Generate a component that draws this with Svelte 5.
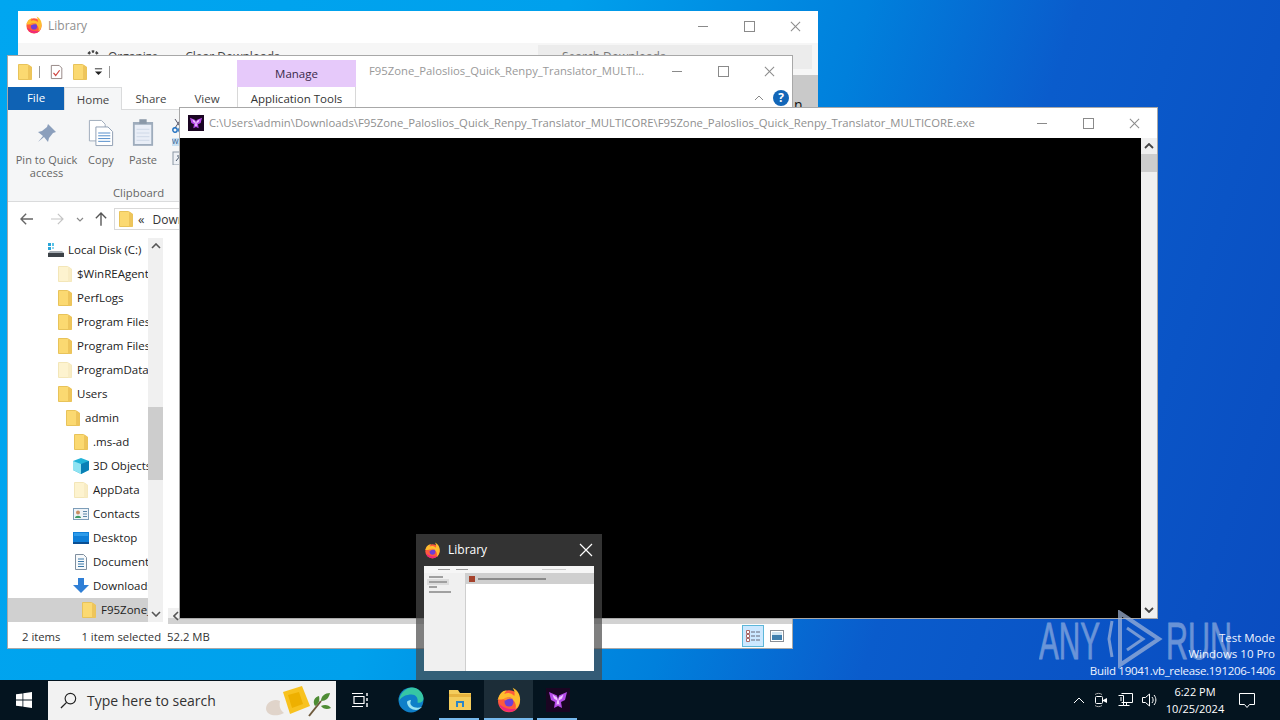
<script lang="ts">
  const consolePath =
    "C:\\Users\\admin\\Downloads\\F95Zone_Paloslios_Quick_Renpy_Translator_MULTICORE\\F95Zone_Paloslios_Quick_Renpy_Translator_MULTICORE.exe";

  // depth is the indent level in the nav pane
  const tree = [
    { name: "Local Disk (C:)", depth: 0, icon: "disk" },
    { name: "$WinREAgent", depth: 1, icon: "pale" },
    { name: "PerfLogs", depth: 1, icon: "folder" },
    { name: "Program Files", depth: 1, icon: "folder" },
    { name: "Program Files (x86)", depth: 1, icon: "folder" },
    { name: "ProgramData", depth: 1, icon: "pale" },
    { name: "Users", depth: 1, icon: "folder" },
    { name: "admin", depth: 2, icon: "folder" },
    { name: ".ms-ad", depth: 3, icon: "folder" },
    { name: "3D Objects", depth: 3, icon: "cube" },
    { name: "AppData", depth: 3, icon: "pale" },
    { name: "Contacts", depth: 3, icon: "contacts" },
    { name: "Desktop", depth: 3, icon: "desktop" },
    { name: "Documents", depth: 3, icon: "docs" },
    { name: "Downloads", depth: 3, icon: "down" },
    { name: "F95Zone_Paloslios", depth: 4, icon: "folder", selected: true },
  ];
</script>

{#snippet folder(pale = false)}
  <svg class="ico" viewBox="0 0 16 16" width="16" height="16">
    <path d="M1.5 0.5h9l4 2.5v12.5h-13z" fill={pale ? "#fdf3cf" : "#fbd971"} stroke={pale ? "#f3e6b8" : "#e8c35a"} />
    <path d="M11 1v14.5h3.5V3z" fill={pale ? "#f8ecc4" : "#eec55b"} />
  </svg>
{/snippet}

{#snippet fox(size = 16)}
  <svg viewBox="0 0 32 32" width={size} height={size}>
    <circle cx="16" cy="17.5" r="13.5" fill="#ff5a3c" />
    <path d="M2.500 15C4 8 9 4 13 4.500c-1.500 1-2.500 2.500-2.500 4 4-2 9-1 12 2.500 1-3.500 0-7-2-10 6.500 3 10 9.500 9 16.500-.7 5-3 8.500-6 10.500 3-6-1-14-8-14-5 0-9 2-15 1z" fill="#ffbd2e" />
    <circle cx="16" cy="18.500" r="5.500" fill="#6d3fd8" />
    <path d="M9 15c3-3 9-3.500 12 0-3-.8-7-.5-9 1.500z" fill="#ff8a30" />
    <path d="M3.500 21c2 6 7 9.500 12.500 9.500 4 0 7.500-1.500 10-4.500-5 2-14 2-22.500-5z" fill="#f0287a" />
  </svg>
{/snippet}

{#snippet moth(size = 16)}
  <svg viewBox="0 0 24 24" width={size} height={size}>
    <rect width="24" height="24" fill="#1a0522" />
    <path d="M3 4l8 3.500 1 3.500 1-3.500L21 4l-2 8-4 2 1 6-4-2-4 2 1-6-4-2z" fill="#b64ae8" />
    <path d="M6.500 6.500l4.500 3 1 4 1-4 4.500-3-1.500 4-3 2 .5 4.500-1.500-1-1.500 1 .5-4.500-3-2z" fill="#f0c4ff" />
  </svg>
{/snippet}

{#snippet treeIcon(kind: string)}
  {#if kind === "folder"}
    {@render folder()}
  {:else if kind === "pale"}
    {@render folder(true)}
  {:else if kind === "disk"}
    <svg class="ico" viewBox="0 0 16 16" width="16" height="16">
      <rect x="0" y="1" width="3" height="3" fill="#2aa5d8" /><rect x="4" y="1" width="2" height="3" fill="#58c3e8" />
      <rect x="0" y="5" width="3" height="3" fill="#2aa5d8" /><rect x="4" y="5" width="2" height="2" fill="#8bd6ef" />
      <path d="M2 9h12l2 2H0z" fill="#a7adb3" /><rect x="0" y="11" width="16" height="4" fill="#3c4248" />
    </svg>
  {:else if kind === "cube"}
    <svg class="ico" viewBox="0 0 16 16" width="16" height="16">
      <path d="M8 0l8 3v9l-8 4-8-4V3z" fill="#22b3d8" /><path d="M0 3l8 3v10l-8-4z" fill="#8fe3f2" /><path d="M16 3l-8 3v10l8-4z" fill="#0a7fb5" />
    </svg>
  {:else if kind === "contacts"}
    <svg class="ico" viewBox="0 0 16 16" width="16" height="16">
      <rect x="0.5" y="2.5" width="15" height="11" fill="#eef3f8" stroke="#7d9db8" />
      <circle cx="5" cy="6.5" r="2" fill="#c98f62" /><path d="M2 12c0-3 6-3 6 0z" fill="#3d9a62" />
      <path d="M10 5.5h4M10 8h4M10 10.5h4" stroke="#5d86a8" />
    </svg>
  {:else if kind === "desktop"}
    <svg class="ico" viewBox="0 0 16 16" width="16" height="16">
      <rect x="0" y="2" width="16" height="11" fill="#0f7fd8" /><rect x="0" y="12" width="16" height="2" fill="#0b4f93" />
      <rect x="1" y="3" width="14" height="3" fill="#2d9bea" />
    </svg>
  {:else if kind === "docs"}
    <svg class="ico" viewBox="0 0 16 16" width="16" height="16">
      <path d="M2.5 0.5h8l3 3v12h-11z" fill="#f7f9fb" stroke="#7f8f9f" />
      <path d="M5 5h6M5 7.5h6M5 10h6M5 12.5h6" stroke="#3b78a8" />
    </svg>
  {:else if kind === "down"}
    <svg class="ico" viewBox="0 0 16 16" width="16" height="16">
      <path d="M5 0h6v7h5l-8 8-8-8h5z" fill="#2f7fd6" />
    </svg>
  {/if}
{/snippet}

<div class="desktop">
  <div class="wall">
    <!-- firefox library, behind everything -->
    <section class="win library">
      <header class="lib-title">
        {@render fox(18)}
        <span>Library</span>
        <div class="caps">
          <i class="min"></i><i class="max"></i><i class="close"></i>
        </div>
      </header>
      <div class="lib-tools">
        <svg class="gear" viewBox="0 0 16 16" width="16" height="16"><circle cx="8" cy="8" r="5.500" fill="none" stroke="#444" stroke-width="2.500" stroke-dasharray="2.500 1.500" /></svg>
        <span>Organize</span>
        <span class="clear">Clear Downloads</span>
        <div class="lib-search">Search Downloads</div>
      </div>
      <div class="lib-row"><span>n</span></div>
    </section>

    <!-- explorer -->
    <section class="win explorer">
      <header class="ex-title">
        <div class="qat">
          {@render folder()}
          <b class="sep"></b>
          <svg class="doc" viewBox="0 0 16 16" width="14" height="16"><path d="M1.5 0.5h9l3 3v12h-12z" fill="#fff" stroke="#8a7a78" /><path d="M4 9l2.5 3L11 6" fill="none" stroke="#d0453f" stroke-width="1.4" /></svg>
          <span class="qat-folder">{@render folder()}</span>
          <svg viewBox="0 0 10 10" width="9" height="9"><path d="M1 2h8" stroke="#222" /><path d="M1 5h8L5 9z" fill="#222" /></svg>
          <b class="sep"></b>
        </div>
        <div class="manage">Manage</div>
        <div class="ex-name">F95Zone_Paloslios_Quick_Renpy_Translator_MULTI...</div>
        <div class="caps">
          <i class="min"></i><i class="max"></i><i class="close"></i>
        </div>
      </header>
      <nav class="tabs">
        <span class="file">File</span>
        <span class="tab on">Home</span>
        <span class="tab share">Share</span>
        <span class="tab view">View</span>
        <span class="apptools">Application Tools</span>
        <span class="collapse">
          <svg viewBox="0 0 10 6" width="10" height="6"><path d="M1 5l4-4 4 4" fill="none" stroke="#888" /></svg>
        </span>
        <span class="help">?</span>
      </nav>
      <div class="ribbon">
        <div class="group">
          <div class="btns">
            <div class="btn pin">
              <svg viewBox="0 0 24 24" width="24" height="24"><path d="M13 3l8 8-3 1-4 5-1 4-4-5-6 5 5-6-5-4 4-1 5-4z" fill="#8b9fbc" /></svg>
              <span>Pin to Quick<br />access</span>
            </div>
            <div class="btn copy">
              <svg viewBox="0 0 28 30" width="26" height="28"><path d="M1.5 1.5h13l4 4v18h-17z" fill="#fff" stroke="#9aa8b8" /><path d="M8.5 8.5h13l5 5v15h-18z" fill="#fff" stroke="#8a9ab0" /><path d="M11 15h13M11 18h13M11 21h13M11 24h13" stroke="#4a86c8" /></svg>
              <span>Copy</span>
            </div>
            <div class="btn paste">
              <svg viewBox="0 0 24 30" width="22" height="28"><rect x="1" y="3" width="22" height="26" fill="#9eacbc" /><rect x="3" y="6" width="18" height="21" fill="#e9eef7" /><rect x="8" y="0" width="8" height="5" fill="#8a98a8" /><path d="M5 11h14M5 15h14M5 19h14M5 23h14" stroke="#cdd6e6" /></svg>
              <span>Paste</span>
            </div>
            <div class="mini">
              <svg viewBox="0 0 12 14" width="12" height="14"><path d="M9 0L3 9M3 0l6 9" stroke="#556" fill="none" /><circle cx="3" cy="11" r="2.2" fill="none" stroke="#1f6fc0" stroke-width="1.4" /><circle cx="9" cy="11" r="2.2" fill="none" stroke="#1f6fc0" stroke-width="1.4" /></svg>
              <span class="w">W...</span>
              <svg viewBox="0 0 12 14" width="12" height="14"><rect x="1" y="1" width="11" height="13" fill="#eef1f5" stroke="#8a96a4" /><path d="M4 10l4-5M5 5h3v3" stroke="#46566a" fill="none" /></svg>
            </div>
          </div>
          <div class="glabel">Clipboard</div>
        </div>
      </div>
      <div class="addr">
        <svg viewBox="0 0 16 14" width="14" height="12"><path d="M7 1L1 7l6 6M1 7h14" fill="none" stroke="#666" stroke-width="1.6" /></svg>
        <svg class="fwd" viewBox="0 0 16 14" width="14" height="12"><path d="M9 1l6 6-6 6M15 7H1" fill="none" stroke="#c4c4c4" stroke-width="1.4" /></svg>
        <svg class="drop" viewBox="0 0 8 5" width="8" height="5"><path d="M1 1l3 3 3-3" fill="none" stroke="#888" stroke-width="1.2" /></svg>
        <svg class="up" viewBox="0 0 14 16" width="12" height="14"><path d="M1 7l6-6 6 6M7 1v15" fill="none" stroke="#555" stroke-width="1.6" /></svg>
        <div class="addr-box">
          {@render folder()}
          <span class="crumbs">«</span>
          <span>Downloads</span>
        </div>
      </div>
      <div class="body">
        <div class="nav">
          <ul>
            {#each tree as row}
              <li class:selected={row.selected} style="padding-left: {row.depth === 0 ? 40 : 41 + row.depth * 8}px">
                {@render treeIcon(row.icon)}
                <span>{row.name}</span>
              </li>
            {/each}
          </ul>
          <div class="nav-scroll">
            <svg viewBox="0 0 10 6" width="10" height="6"><path d="M1 5l4-4 4 4" fill="none" stroke="#555" stroke-width="1.6" /></svg>
            <div class="nav-track"><div class="nav-thumb"></div></div>
            <svg viewBox="0 0 10 6" width="10" height="6"><path d="M1 1l4 4 4-4" fill="none" stroke="#555" stroke-width="1.6" /></svg>
          </div>
        </div>
        <div class="files">
          <div class="hbar">
            <svg viewBox="0 0 6 10" width="6" height="10"><path d="M5 1L1 5l4 4" fill="none" stroke="#555" stroke-width="1.6" /></svg>
          </div>
        </div>
      </div>
      <footer class="status">
        <span class="count">2 items</span>
        <span>1 item selected</span>
        <span>52.2 MB</span>
        <div class="views">
          <span class="v on">
            <svg viewBox="0 0 16 14" width="16" height="14"><path d="M1.5 1.5h3v3h-3zM1.5 5.5h3v3h-3zM1.5 9.5h3v3h-3z" fill="#fff" stroke="#a66" /><path d="M6 3h4M11 3h4M6 7h4M11 7h4M6 11h4M11 11h4" stroke="#667" /></svg>
          </span>
          <span class="v">
            <svg viewBox="0 0 14 12" width="14" height="12"><rect x="0.5" y="0.5" width="13" height="11" fill="#fff" stroke="#8a8f96" /><rect x="2" y="2" width="10" height="8" fill="#3f7fae" /><path d="M2 5h10V2H2z" fill="#cfe4f2" /></svg>
          </span>
        </div>
      </footer>
    </section>

    <!-- console host -->
    <section class="win console">
      <header class="con-title">
        {@render moth(16)}
        <span class="con-path">{consolePath}</span>
        <div class="caps">
          <i class="min"></i><i class="max"></i><i class="close"></i>
        </div>
      </header>
      <div class="con-body">
        <div class="screen"></div>
        <div class="con-scroll">
          <svg viewBox="0 0 10 6" width="10" height="6"><path d="M1 5l4-4 4 4" fill="none" stroke="#444" stroke-width="1.8" /></svg>
          <div class="con-track"><div class="con-thumb"></div></div>
          <svg viewBox="0 0 10 6" width="10" height="6"><path d="M1 1l4 4 4-4" fill="none" stroke="#444" stroke-width="1.8" /></svg>
        </div>
      </div>
    </section>

    <!-- watermark + test mode text -->
    <svg class="mark" viewBox="0 0 200 60" width="200" height="60">
      <g fill="#c8d4ea" opacity="0.5" stroke="#c8d4ea" stroke-width="0.8" font-family="Liberation Sans, sans-serif" font-size="52">
        <text x="0" y="49" textLength="61" lengthAdjust="spacingAndGlyphs">ANY</text>
        <text x="127" y="49" textLength="66" lengthAdjust="spacingAndGlyphs">RUN</text>
      </g>
      <g fill="none" stroke="#a4b8da" stroke-opacity="0.7" stroke-width="4">
        <path d="M81 3l39 26-39 26z" />
        <path d="M88 18l16 11-16 11" stroke-width="3" />
        <path d="M73 11L70 29l3 18" stroke-width="3" />
      </g>
    </svg>
    <div class="testmode">
      <span>Test Mode</span>
      <span>Windows 10 Pro</span>
      <span class="build">Build 19041.vb_release.191206-1406</span>
    </div>

    <!-- taskbar hover preview -->
    <div class="peek">
      <div class="peek-head">
        {@render fox(17)}
        <span>Library</span>
        <svg class="peek-x" viewBox="0 0 14 14" width="14" height="14"><path d="M1 1l12 12M13 1L1 13" stroke="#fff" stroke-width="1.2" /></svg>
      </div>
      <div class="thumb">
        <div class="thumb-bar"><i></i><i></i><i></i></div>
        <div class="thumb-main">
          <div class="thumb-side">
            <i class="w1"></i><i class="w2 hi"></i><i class="w3"></i><i class="w4"></i>
          </div>
          <div class="thumb-list">
            <div class="thumb-row"><b></b><i></i></div>
          </div>
        </div>
      </div>
    </div>
  </div>

  <footer class="taskbar">
    <div class="start">
      <svg viewBox="0 0 16 16" width="16" height="16"><path d="M0 2.3l6.5-.9v6.2H0zM7.3 1.3L16 0v7.6H7.3zM0 8.4h6.5v6.2L0 13.7zM7.3 8.4H16V16l-8.7-1.2z" fill="#fff" /></svg>
    </div>
    <div class="searchbox">
      <svg viewBox="0 0 18 18" width="17" height="17"><circle cx="11" cy="7" r="5.6" fill="none" stroke="#222" stroke-width="1.2" /><path d="M7 11l-6 6" stroke="#222" stroke-width="1.4" /></svg>
      <span>Type here to search</span>
      <svg class="doodle" viewBox="0 0 70 34" width="70" height="34">
        <path d="M1 25c0-7 8-11 14-8-1 5 0 9 4 12-7 4-17 3-18-4z" fill="#e0d4ca" />
        <path d="M18 8l19-6 8 20-20 8z" fill="#f8c21f" /><path d="M23 11l11-3 4 12-11 4z" fill="#eeb000" />
        <path d="M44 32l12-15" stroke="#6e5a3c" stroke-width="2" />
        <path d="M50 22c-3-5 0-9 4-10 1 4 0 8-4 10zM56 17c0-5 4-8 9-8-1 5-4 8-9 8zM56 22c4-2 8-1 10 2-4 2-8 1-10-2z" fill="#4e8c34" />
      </svg>
    </div>
    <div class="taskicon">
      <svg viewBox="0 0 18 18" width="18" height="18"><path d="M3 5.5h10v7H3zM1 2.500h11M1 15.500h11" fill="none" stroke="#fff" stroke-width="1.2" /><path d="M16 2v3M16 7v3M16 12v4" stroke="#fff" stroke-width="1.4" /></svg>
    </div>
    <div class="apps">
      <div class="app edge">
        <svg viewBox="0 0 26 26" width="26" height="26">
          <circle cx="13" cy="13" r="12.500" fill="#0f7fc8" />
          <path d="M1 14C2 5 9 .5 14 .5c7 0 11.500 6 11.500 11 0 3-3 5-6 4 1-5-2-8-6-8-5 0-10 2-12.500 6.500z" fill="#36c6a4" />
          <path d="M9 15c0 5 5 8 9 8 2 0 4-1 6-3-3 1-8 1-10-1-2-2-2-3-1-6-2 0-4 1-4 2z" fill="#9be3f2" />
        </svg>
      </div>
      <div class="app run">
        <svg viewBox="0 0 24 22" width="24" height="22">
          <path d="M1 1h9l2 3h11v17H1z" fill="#f4cd5c" /><rect x="1" y="5" width="22" height="3" fill="#e6b33e" />
          <rect x="8" y="12" width="8" height="6" fill="#2a86c8" /><rect x="10" y="14" width="4" height="4" fill="#f4cd5c" />
        </svg>
      </div>
      <div class="app run active">{@render fox(26)}</div>
      <div class="app run">{@render moth(24)}</div>
    </div>
    <div class="tray">
      <svg viewBox="0 0 12 7" width="12" height="7"><path d="M1 6l5-5 5 5" fill="none" stroke="#fff" /></svg>
      <svg viewBox="0 0 16 16" width="16" height="16"><rect x="2.500" y="4.500" width="7" height="7" rx="1" fill="none" stroke="#fff" /><path d="M10 8l4-2v5l-4-2z" fill="#fff" /><path d="M2 2.500c2-1.500 5-1.500 7 0M2 13.500c2 1.500 5 1.500 7 0" fill="none" stroke="#aaa" /></svg>
      <svg viewBox="0 0 16 16" width="16" height="16"><path d="M4.500 1.500h11v9h-11M1.500 3.500h5v10h-5M6.500 13.500h6M9.500 10.500v3M3 6h2M3 8h2" fill="none" stroke="#fff" /></svg>
      <svg viewBox="0 0 17 16" width="17" height="16"><path d="M1.500 5.500h3l4-3.500v12l-4-3.500h-3z" fill="none" stroke="#fff" /><path d="M11 5c1.500 2 1.500 4 0 6M13 3c2.500 3 2.500 7 0 10" fill="none" stroke="#fff" /></svg>
      <div class="clock"><span>6:22 PM</span><span>10/25/2024</span></div>
      <svg class="note" viewBox="0 0 18 17" width="18" height="17"><path d="M1.500 1.500h15v11h-5l-2.500 3-2.500-3h-5z" fill="none" stroke="#fff" /></svg>
    </div>
  </footer>
</div>

<style>
  :global(body) {
    margin: 0;
    overflow: hidden;
  }
  .desktop {
    width: 1280px;
    height: 720px;
    display: flex;
    flex-direction: column;
    overflow: hidden;
    font-family: "Open Sans", "Noto Sans", sans-serif;
    font-size: 11.3px;
    color: #333;
  }
  .wall {
    position: relative;
    flex: 1;
    background: linear-gradient(108deg, #00a6f0 0%, #00a0ec 38%, #0080dc 58%, #0a5ccc 72%, #0a4cc0 100%);
  }
  .win {
    position: absolute;
    background: #fff;
    box-sizing: border-box;
  }
  .caps {
    display: flex;
    align-items: center;
    margin-left: auto;
  }
  .caps i {
    position: relative;
    display: block;
    width: 46px;
    height: 30px;
  }
  .min::after {
    content: "";
    position: absolute;
    left: 18px;
    top: 15px;
    width: 10px;
    border-top: 1px solid #8a8a8a;
  }
  .max::after {
    content: "";
    position: absolute;
    left: 18px;
    top: 10px;
    width: 9px;
    height: 9px;
    border: 1px solid #8a8a8a;
  }
  .close::before,
  .close::after {
    content: "";
    position: absolute;
    left: 17px;
    top: 15px;
    width: 13px;
    border-top: 1px solid #8a8a8a;
    transform: rotate(45deg);
  }
  .close::after {
    transform: rotate(-45deg);
  }

  .library {
    left: 18px;
    top: 11px;
    width: 800px;
    height: 560px;
  }
  .lib-title {
    display: flex;
    align-items: center;
    gap: 5px;
    height: 30px;
    padding: 0 0 2px 7px;
    box-sizing: border-box;
    font-size: 12px;
    color: #8e8e8e;
  }
  .lib-title .caps {
    margin-bottom: -2px;
  }
  .lib-tools {
    display: flex;
    align-items: center;
    gap: 7px;
    height: 32px;
    margin-top: 2px;
    padding: 0 6px 5px 67px;
    box-sizing: border-box;
    background: #f6f6f6;
    color: #444;
    font-size: 12px;
  }
  .clear {
    margin-left: 20px;
  }
  .lib-search {
    margin-left: auto;
    width: 274px;
    height: 24px;
    line-height: 24px;
    padding-left: 24px;
    box-sizing: border-box;
    background: #ececec;
    color: #777;
  }
  .lib-row {
    height: 60px;
    background: #c9c9c9;
    color: #111;
    font-size: 14px;
    padding: 20px 0 0 776px;
    box-sizing: border-box;
  }

  .explorer {
    left: 8px;
    top: 56px;
    width: 784px;
    height: 592px;
    display: flex;
    flex-direction: column;
    box-shadow: 0 0 0 1px #a8a8a8;
  }
  .ex-title {
    display: flex;
    height: 31px;
    flex: none;
  }
  .qat {
    display: flex;
    align-items: center;
    gap: 6px;
    width: 229px;
    padding-left: 9px;
    box-sizing: border-box;
  }
  .sep {
    width: 1px;
    height: 12px;
    background: #999;
  }
  .doc {
    margin-left: 4px;
  }
  .qat-folder {
    display: flex;
    margin-left: 2px;
  }
  .manage {
    width: 119px;
    margin-top: 4px;
    text-align: center;
    line-height: 27px;
    background: #e6c9fa;
    color: #3a2a4a;
    font-size: 11.5px;
  }
  .ex-name {
    margin: 7px 0 0 13px;
    color: #999;
    white-space: nowrap;
  }
  .ex-title .caps {
    align-self: flex-start;
  }
  .tabs {
    position: relative;
    display: flex;
    height: 23px;
    box-sizing: border-box;
    flex: none;
    align-items: center;
    border-bottom: 1px solid #dadbdc;
    font-size: 11.5px;
    color: #444;
  }
  .file {
    width: 56px;
    height: 23px;
    line-height: 22px;
    text-align: center;
    background: #0f62b4;
    color: #fff;
  }
  .tab {
    text-align: center;
  }
  .tab.on {
    width: 58px;
    height: 23px;
    line-height: 24px;
    background: #f5f6f7;
    border: 1px solid #dadbdc;
    border-bottom: 0;
    box-sizing: border-box;
    align-self: flex-start;
  }
  .share {
    width: 58px;
  }
  .view {
    width: 54px;
  }
  .apptools {
    margin-left: 3px;
    width: 119px;
    text-align: center;
    border-left: 1px solid #d8d8d8;
    border-right: 1px solid #d8d8d8;
    box-sizing: border-box;
    height: 22px;
    line-height: 24px;
    color: #333;
  }
  .collapse {
    margin-left: auto;
    padding-right: 9px;
    display: flex;
  }
  .help {
    width: 16px;
    height: 16px;
    line-height: 16px;
    margin-right: 3px;
    text-align: center;
    border-radius: 50%;
    background: #1266b8;
    color: #fff;
    font-weight: 700;
    font-size: 12px;
  }
  .ribbon {
    height: 92px;
    flex: none;
    background: #f5f6f7;
    border-bottom: 1px solid #dadbdc;
    box-sizing: border-box;
    color: #666;
  }
  .group {
    display: flex;
    flex-direction: column;
    height: 100%;
  }
  .btns {
    display: flex;
    flex: 1;
    min-height: 0;
    padding: 9px 0 0 8px;
    gap: 10px;
  }
  .btn {
    display: flex;
    flex-direction: column;
    align-items: center;
    text-align: center;
    line-height: 13px;
    font-size: 11px;
    white-space: nowrap;
  }
  .btn svg {
    height: 28px;
    margin-bottom: 6px;
  }
  .pin {
    width: 61px;
  }
  .copy {
    width: 28px;
  }
  .paste {
    width: 32px;
    margin-left: 2px;
  }
  .mini {
    display: flex;
    flex-direction: column;
    gap: 5px;
    margin-left: 3px;
  }
  .w {
    display: block;
    width: 12px;
    height: 8px;
    line-height: 8px;
    font-size: 7px;
    overflow: hidden;
    background: #c8e0f2;
    color: #1f4f86;
  }
  .glabel {
    height: 18px;
    line-height: 19px;
    padding-left: 105px;
  }
  .addr {
    display: flex;
    align-items: center;
    height: 34px;
    flex: none;
    padding-left: 12px;
    font-size: 12px;
  }
  .fwd {
    margin-left: 16px;
  }
  .drop {
    margin-left: 12px;
  }
  .up {
    margin-left: 11px;
  }
  .addr-box {
    display: flex;
    align-items: center;
    gap: 4px;
    height: 22px;
    width: 300px;
    margin-left: 7px;
    padding-left: 3px;
    border: 1px solid #d9d9d9;
    box-sizing: border-box;
    color: #333;
  }
  .crumbs {
    font-size: 13px;
    margin-right: 4px;
  }
  .body {
    position: relative;
    display: flex;
    flex: 1;
    min-height: 0;
  }
  .nav {
    display: flex;
    width: 156px;
    flex: none;
    padding-top: 2px;
    box-sizing: border-box;
  }
  ul {
    list-style: none;
    margin: 0;
    padding: 0;
    width: 140px;
    overflow: hidden;
    flex: none;
  }
  li {
    display: flex;
    align-items: center;
    gap: 4px;
    height: 24px;
    box-sizing: border-box;
    white-space: nowrap;
    color: #222;
    font-size: 11.5px;
  }
  li span {
    padding-bottom: 2px;
  }
  li.selected {
    background: #d0d0d0;
  }
  .ico {
    flex: none;
  }
  .nav-scroll {
    width: 15px;
    display: flex;
    flex-direction: column;
    align-items: center;
    background: #f0f0f0;
    padding: 5px 0;
    box-sizing: border-box;
    height: 384px;
  }
  .nav-track {
    flex: 1;
    width: 100%;
    margin: 4px 0;
  }
  .nav-thumb {
    width: 100%;
    height: 73px;
    margin-top: 154px;
    background: #cdcdcd;
  }
  .files {
    position: relative;
    flex: 1;
  }
  .hbar {
    position: absolute;
    left: 4px;
    right: 0;
    bottom: 0;
    height: 16px;
    padding-left: 5px;
    display: flex;
    align-items: center;
    background: #f0f0f0;
    box-shadow: inset 0 -6px 0 #d2d2d2;
  }
  .status {
    display: flex;
    align-items: center;
    gap: 6px;
    height: 24px;
    flex: none;
    padding-left: 14px;
    color: #333;
  }
  .count {
    margin-right: 15px;
  }
  .views {
    display: flex;
    align-items: center;
    margin-left: auto;
    margin-right: 4px;
    gap: 2px;
  }
  .v {
    display: flex;
    align-items: center;
    justify-content: center;
    width: 22px;
    height: 22px;
    box-sizing: border-box;
  }
  .v.on {
    background: #cce8ff;
    border: 1px solid #5db7d9;
  }

  .console {
    left: 180px;
    top: 108px;
    width: 977px;
    height: 510px;
    display: flex;
    flex-direction: column;
    box-shadow: 0 0 0 1px #a8a8a8;
  }
  .con-title {
    display: flex;
    align-items: center;
    gap: 5px;
    height: 30px;
    flex: none;
    padding-left: 8px;
    color: #8f8f8f;
    white-space: nowrap;
  }
  .con-path {
    padding-bottom: 2px;
  }
  .con-body {
    display: flex;
    flex: 1;
    min-height: 0;
  }
  .screen {
    flex: 1;
    background: #000;
  }
  .con-scroll {
    width: 16px;
    display: flex;
    flex-direction: column;
    align-items: center;
    padding: 5px 0;
    box-sizing: border-box;
    background: #f0f0f0;
  }
  .con-track {
    flex: 1;
    width: 100%;
    margin: 5px 0;
  }
  .con-thumb {
    width: 100%;
    height: 18px;
    background: #cdcdcd;
  }

  .mark {
    position: absolute;
    left: 1039px;
    top: 610px;
  }
  .testmode {
    position: absolute;
    right: 5px;
    bottom: 1px;
    display: flex;
    flex-direction: column;
    align-items: flex-end;
    color: #eef4ff;
    font-size: 11.5px;
    line-height: 16.5px;
  }
  .build {
    letter-spacing: -0.3px;
  }

  .peek {
    position: absolute;
    left: 416px;
    top: 534px;
    width: 186px;
    height: 146px;
    box-sizing: border-box;
    padding: 0 8px;
    background: rgba(73, 73, 73, 0.7);
  }
  .peek-head {
    display: flex;
    align-items: center;
    gap: 7px;
    height: 32px;
    color: #fff;
    font-size: 12px;
  }
  .peek-head span {
    padding-bottom: 2px;
  }
  .peek-x {
    margin-left: auto;
    margin-right: 1px;
  }
  .thumb {
    height: 105px;
    width: 170px;
    background: #fff;
    display: flex;
    flex-direction: column;
  }
  .thumb-bar {
    display: flex;
    align-items: center;
    gap: 6px;
    padding-left: 14px;
    height: 7px;
    background: #f6f6f6;
    flex: none;
  }
  .thumb-bar i {
    width: 12px;
    height: 1px;
    background: #999;
  }
  .thumb-bar i:last-child {
    width: 24px;
    margin-left: 68px;
    background: #ccc;
  }
  .thumb-main {
    display: flex;
    flex: 1;
  }
  .thumb-side {
    width: 42px;
    background: #f0f0f0;
    border-right: 1px solid #cfcfcf;
    box-sizing: border-box;
    display: flex;
    flex-direction: column;
    gap: 3px;
    padding: 3px 0 0 5px;
  }
  .thumb-side i {
    display: block;
    height: 2px;
    background: #a0a0a0;
  }
  .w1 {
    width: 14px;
  }
  .w2 {
    width: 18px;
  }
  .w2.hi {
    box-shadow: 0 0 0 2px #dcdcdc;
  }
  .w3 {
    width: 8px;
  }
  .w4 {
    width: 22px;
  }
  .thumb-list {
    flex: 1;
  }
  .thumb-row {
    display: flex;
    align-items: center;
    gap: 3px;
    height: 11px;
    background: #cfcfcf;
    padding-left: 3px;
  }
  .thumb-row b {
    width: 6px;
    height: 6px;
    background: #a5422c;
  }
  .thumb-row i {
    width: 68px;
    height: 2px;
    background: #8a8a8a;
  }

  .taskbar {
    display: flex;
    align-items: stretch;
    height: 40px;
    flex: none;
    background: #04141f;
    color: #fff;
  }
  .start {
    width: 48px;
    display: flex;
    align-items: center;
    justify-content: center;
  }
  .searchbox {
    width: 288px;
    box-sizing: border-box;
    display: flex;
    align-items: center;
    gap: 10px;
    padding-left: 12px;
    margin-top: 1px;
    background: #f2f2f2;
    color: #333;
    font-size: 14px;
  }
  .doodle {
    margin-left: auto;
    margin-right: 1px;
  }
  .taskicon {
    width: 48px;
    padding-right: 2px;
    display: flex;
    align-items: center;
    justify-content: center;
  }
  .apps {
    display: flex;
  }
  .app {
    width: 49px;
    display: flex;
    align-items: center;
    justify-content: center;
    position: relative;
  }
  .run::after {
    content: "";
    position: absolute;
    left: 4px;
    right: 5px;
    bottom: 0;
    height: 2px;
    background: #76b9ed;
  }
  .active {
    background: #1c2d38;
  }
  .active.run::after {
    left: 0;
    right: 0;
  }
  .tray {
    display: flex;
    align-items: center;
    margin-left: auto;
    padding-right: 24px;
    gap: 8px;
  }
  .clock {
    display: flex;
    flex-direction: column;
    align-items: center;
    width: 64px;
    margin-left: -3px;
    font-size: 11px;
    line-height: 17px;
  }
  .note {
    margin-left: 3px;
  }
</style>
